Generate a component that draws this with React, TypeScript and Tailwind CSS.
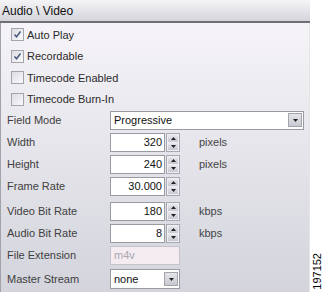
import React from "react";

const font = { fontFamily: '"Liberation Sans", Arial, sans-serif' };

const Check = ({ checked, label }: { checked?: boolean; label: string }) => (
  <div className="flex h-[21.5px] items-center">
    <div className="ml-[10px] flex h-[13px] w-[13px] items-center justify-center border border-[#a4a4ac] bg-gradient-to-br from-[#dcdce2] to-[#fbfbfd]">
      {checked && (
        <svg width="9" height="9" viewBox="0 0 9 9">
          <path d="M1.5 4.5 L3.5 6.8 L7.5 1.5" fill="none" stroke="#4a5a82" strokeWidth="1.5" />
        </svg>
      )}
    </div>
    <span className="ml-[3px] text-[11px] text-[#2a2a2a]">{label}</span>
  </div>
);

const Arrow = ({ up }: { up?: boolean }) => (
  <svg width="5" height="3" viewBox="0 0 5 3">
    <path d={up ? "M0 3 L2.5 0 L5 3 Z" : "M0 0 L5 0 L2.5 3 Z"} fill="#222" />
  </svg>
);

const DropBtn = () => (
  <div className="flex h-[14px] w-[14px] items-center justify-center border border-[#a4a4ac] bg-gradient-to-b from-[#e4e4ea] to-[#c9c9d2]">
    <Arrow />
  </div>
);

const Spinner = () => (
  <div className="ml-[1px] flex h-[19px] w-[14px] flex-col gap-[1px] border border-[#a8a8b0] bg-[#f0f0f4] p-[1px]">
    <div className="flex flex-1 items-center justify-center bg-gradient-to-b from-[#e8e8ee] to-[#c8c8d2]">
      <Arrow up />
    </div>
    <div className="flex flex-1 items-center justify-center bg-gradient-to-b from-[#e8e8ee] to-[#c8c8d2]">
      <Arrow />
    </div>
  </div>
);

const Row = ({ label, children, className = "" }: { label: string; children: React.ReactNode; className?: string }) => (
  <div className={`flex h-[22px] items-center ${className}`}>
    <span className="w-[109px] pl-[6px] text-[11px] text-[#404040]">{label}</span>
    {children}
  </div>
);

const NumField = ({ value, unit }: { value: string; unit?: string }) => (
  <>
    <div className="flex h-[19px] w-[55px] items-center justify-end border border-[#9a9aa2] bg-white pr-[2px] text-[11px] text-[#111]">
      {value}
    </div>
    <Spinner />
    {unit && <span className="ml-[19px] text-[11px] text-[#444]">{unit}</span>}
  </>
);

export default function App() {
  return (
    <div className="flex h-[292px] w-[324px] bg-white" style={font}>
      <div className="flex w-[310px] flex-col">
        <div className="flex h-[23px] items-center border-b-2 border-[#6f6f74] bg-gradient-to-b from-[#f4f4f7] to-[#d4d4dc] pl-[2px] text-[12px] text-[#111]">
          Audio \ Video
        </div>
        <div className="flex-1 border-l border-[#a2a2aa] border-r border-r-[#e4e4ea] bg-gradient-to-b from-[#f6f4f8] to-[#d3d4dc] pt-[1px]">
          <Check checked label="Auto Play" />
          <Check checked label="Recordable" />
          <Check label="Timecode Enabled" />
          <Check label="Timecode Burn-In" />
          <Row label="Field Mode" className="mt-[-1px]">
            <div className="flex h-[19px] w-[194px] items-center justify-between border border-[#9a9aa2] bg-white pl-[3px] pr-[1px] text-[11px] text-[#111]">
              Progressive
              <DropBtn />
            </div>
          </Row>
          <Row label="Width">
            <NumField value="320" unit="pixels" />
          </Row>
          <Row label="Height">
            <NumField value="240" unit="pixels" />
          </Row>
          <Row label="Frame Rate">
            <NumField value="30.000" />
          </Row>
          <Row label="Video Bit Rate" className="mt-[3px]">
            <NumField value="180" unit="kbps" />
          </Row>
          <Row label="Audio Bit Rate">
            <NumField value="8" unit="kbps" />
          </Row>
          <Row label="File Extension">
            <div className="flex h-[19px] w-[70px] items-center border border-[#c4c4cc] bg-[#f4ecf1] pl-[3px] text-[11px] text-[#a8a8b0]">
              m4v
            </div>
          </Row>
          <Row label="Master Stream" className="mt-[2px]">
            <div className="flex h-[20px] w-[70px] items-center justify-between border border-[#9a9aa2] bg-white pl-[3px] pr-[1px] text-[11px] text-[#111]">
              none
              <DropBtn />
            </div>
          </Row>
        </div>
      </div>
      <div className="flex flex-1 items-end justify-center pb-[2px]">
        <span className="text-[11px] leading-none text-black [writing-mode:vertical-rl] rotate-180">197152</span>
      </div>
    </div>
  );
}
